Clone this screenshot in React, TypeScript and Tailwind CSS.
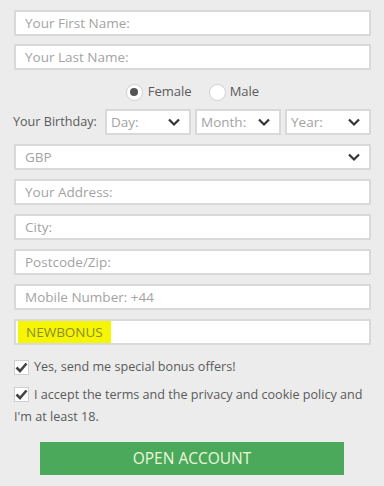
import React from 'react';

const font = { fontFamily: '"Open Sans", "Liberation Sans", sans-serif' };

const Chevron = () => (
  <svg width="14" height="10" viewBox="0 0 14 10" className="shrink-0">
    <path d="M2 2.5 L7 7.5 L12 2.5" fill="none" stroke="#333" strokeWidth="2.2" />
  </svg>
);

const Field = ({ placeholder }: { placeholder: string }) => (
  <div className="h-[26px] border-2 border-[#d9d9d9] bg-white flex items-center pl-[9px] text-[13.5px] text-[#a3a3a3]">
    {placeholder}
  </div>
);

const Select = ({ label, className }: { label: string; className?: string }) => (
  <div
    className={`h-[26px] border-2 border-[#d9d9d9] bg-white flex items-center justify-between pl-[4px] pr-[8px] text-[13.5px] text-[#a3a3a3] ${className ?? ''}`}
  >
    <span>{label}</span>
    <Chevron />
  </div>
);

const Check = () => (
  <div className="w-[15px] h-[15px] border border-[#cfcfcf] bg-white flex items-center justify-center shrink-0">
    <svg width="13" height="11" viewBox="0 0 13 11">
      <path d="M1.5 5.5 L5 9 L11.5 1.5" fill="none" stroke="#444" strokeWidth="2.6" />
    </svg>
  </div>
);

export default function App() {
  return (
    <div className="w-[384px] h-[486px] bg-[#ececec] overflow-hidden" style={font}>
      <div className="pt-[10px] pl-[14px] pr-[13px] flex flex-col">
        <Field placeholder="Your First Name:" />
        <div className="h-[8px]" />
        <Field placeholder="Your Last Name:" />

        {/* gender */}
        <div className="h-[39px] pt-[5px] flex items-center justify-center gap-[17px] text-[13px] text-[#5a5a5a]">
          <label className="flex items-center gap-[5px]">
            <span className="w-[17px] h-[17px] rounded-full bg-white border border-[#cfcfcf] flex items-center justify-center">
              <span className="w-[8px] h-[8px] rounded-full bg-[#555]" />
            </span>
            Female
          </label>
          <label className="flex items-center gap-[4px]">
            <span className="w-[17px] h-[17px] rounded-full bg-white border border-[#cfcfcf]" />
            Male
          </label>
        </div>

        {/* birthday */}
        <div className="flex items-center h-[26px]">
          <span className="text-[12.6px] text-[#5a5a5a] w-[92px] -ml-[1px]">Your Birthday:</span>
          <div className="flex-1 flex gap-[4px]">
            <Select label="Day:" className="flex-1" />
            <Select label="Month:" className="flex-1" />
            <Select label="Year:" className="flex-1" />
          </div>
        </div>
        <div className="h-[9px]" />
        <Select label="GBP" className="pl-[9px]" />
        <div className="h-[9px]" />
        <Field placeholder="Your Address:" />
        <div className="h-[9px]" />
        <Field placeholder="City:" />
        <div className="h-[9px]" />
        <Field placeholder="Postcode/Zip:" />
        <div className="h-[9px]" />
        <Field placeholder="Mobile Number: +44" />
        <div className="h-[9px]" />
        <div className="h-[26px] border-2 border-[#d9d9d9] bg-white flex items-stretch pl-[2px] text-[13.5px]">
          <span className="bg-[#f6f600] text-[#8b8b3a] px-[8px] flex items-center">NEWBONUS</span>
        </div>

        {/* checkboxes */}
        <div className="mt-[13px] flex items-center gap-[5px] text-[12.6px] text-[#5a5a5a]">
          <Check />
          <span>Yes, send me special bonus offers!</span>
        </div>
        <div className="mt-[7px] text-[12.6px] text-[#5a5a5a] leading-[22px]">
          <span className="inline-flex align-middle mr-[5px] -mt-[3px]">
            <Check />
          </span>
          I accept the terms and the privacy and cookie policy and I'm at least 18.
        </div>

        <div className="mt-[14px] w-[304px] h-[33px] bg-[#4aa95a] flex items-center justify-center text-[15.5px] text-[#eef7dc] ml-[26px]">
          OPEN ACCOUNT
        </div>
      </div>
    </div>
  );
}
